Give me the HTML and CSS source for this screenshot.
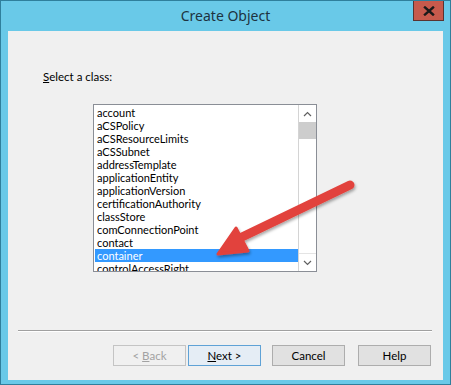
FILE: index.html
```html
<!DOCTYPE html>
<html>
<head>
<meta charset="utf-8">
<link rel="stylesheet" href="styles.css">
</head>
<body>
<div class="window">
  <div class="titlebar">
    <div class="title">Create Object</div>
    <div class="close">
      <svg width="12" height="10" viewBox="0 0 12 10"><path d="M2 1.5 L10 8.5 M10 1.5 L2 8.5" stroke="#1a1a1a" stroke-width="2.4" stroke-linecap="square"/></svg>
    </div>
  </div>
  <div class="client">
    <div class="label"><u>S</u>elect a class:</div>
    <div class="listbox">
      <div class="items">
        <div class="item">account</div>
        <div class="item">aCSPolicy</div>
        <div class="item">aCSResourceLimits</div>
        <div class="item">aCSSubnet</div>
        <div class="item">addressTemplate</div>
        <div class="item">applicationEntity</div>
        <div class="item">applicationVersion</div>
        <div class="item">certificationAuthority</div>
        <div class="item">classStore</div>
        <div class="item">comConnectionPoint</div>
        <div class="item">contact</div>
        <div class="item selected">container</div>
        <div class="item">controlAccessRight</div>
      </div>
      <div class="scrollbar">
        <div class="sb-btn">
          <svg width="9" height="6" viewBox="0 0 9 6"><path d="M1 5 L4.5 1.5 L8 5" fill="none" stroke="#606060" stroke-width="1.2"/></svg>
        </div>
        <div class="sb-thumb"></div>
        <div class="sb-track"></div>
        <div class="sb-btn">
          <svg width="9" height="6" viewBox="0 0 9 6"><path d="M1 1 L4.5 4.5 L8 1" fill="none" stroke="#606060" stroke-width="1.2"/></svg>
        </div>
      </div>
    </div>
    <div class="separator"></div>
    <div class="buttons">
      <div class="btn disabled">&lt; <u>B</u>ack</div>
      <div class="btn default"><u>N</u>ext &gt;</div>
      <div class="btn cancel">Cancel</div>
      <div class="btn help">Help</div>
    </div>
  </div>
  <svg class="arrow" width="451" height="385" viewBox="0 0 451 385">
    <defs>
      <filter id="sh" x="-20%" y="-20%" width="140%" height="140%">
        <feDropShadow dx="1" dy="2" stdDeviation="1.5" flood-color="#000" flood-opacity="0.35"/>
      </filter>
    </defs>
    <g filter="url(#sh)" fill="#e2423c" stroke="#e2423c">
      <line x1="350" y1="185" x2="242" y2="237" stroke-width="9" stroke-linecap="round"/>
      <path d="M218 254 L236 228 L248 251 Z" stroke-width="3" stroke-linejoin="round"/>
    </g>
  </svg>
</div>
</body>
</html>
```
FILE: styles.css
```css
html, body {
  margin: 0;
  padding: 0;
  background: #ffffff;
}
body {
  width: 451px;
  height: 385px;
  font-family: "Lato", "Noto Sans", sans-serif;
}
.window {
  position: relative;
  box-sizing: border-box;
  width: 451px;
  height: 385px;
  background: #69c9e8;
  border: 1px solid #2f7f9c;
  display: flex;
  flex-direction: column;
}
.titlebar {
  height: 30px;
  display: grid;
  grid-template-columns: 1fr auto 1fr;
  align-items: start;
}
.title {
  grid-column: 2;
  font-family: "Noto Sans", sans-serif;
  font-size: 14px;
  line-height: 20px;
  margin-top: 5px;
  color: #1d3340;
}
.close {
  grid-column: 3;
  justify-self: end;
  margin-right: 6px;
  width: 31px;
  height: 20px;
  box-sizing: border-box;
  background: #c75a4c;
  border: 1px solid #5a3330;
  border-top: none;
  display: flex;
  align-items: center;
  justify-content: center;
}
.client {
  flex: 1;
  margin: 0 7px 4px 7px;
  background: #f0f0f0;
  display: flex;
  flex-direction: column;
  font-size: 11px;
  color: #000;
}
.label {
  margin: 38px 0 0 35px;
  line-height: 15px;
  height: 15px;
  font-size: 11.5px;
}
.listbox {
  margin: 20px 0 0 85px;
  width: 224px;
  height: 168px;
  box-sizing: border-box;
  border: 1px solid #8a8e96;
  background: #fff;
  display: flex;
  overflow: hidden;
}
.items {
  flex: 1;
  padding: 1px 0 0 1px;
  overflow: hidden;
}
.item {
  height: 13px;
  line-height: 13px;
  padding-left: 2px;
  white-space: nowrap;
}
.item.selected {
  background: #3399ff;
  color: #ffffff;
}
.scrollbar {
  width: 17px;
  border-left: 1px solid #d4d4d4;
  display: flex;
  flex-direction: column;
  background: #fff;
}
.sb-btn {
  height: 17px;
  display: flex;
  align-items: center;
  justify-content: center;
}
.sb-thumb {
  height: 17px;
  background: #cdcdcd;
}
.sb-track {
  flex: 1;
  border-bottom: 1px solid #e4e4e4;
}
.separator {
  margin: 58px 11px 0 10px;
  height: 1px;
  background: #a0a0a0;
  border-bottom: 1px solid #ffffff;
}
.buttons {
  margin: 13px 0 0 105px;
  display: flex;
}
.btn {
  width: 73px;
  height: 21px;
  box-sizing: border-box;
  border: 1px solid #adadad;
  background: #e1e1e1;
  text-align: center;
  line-height: 19px;
  font-size: 11.5px;
}
.btn.disabled {
  color: #a2a2a2;
  border-color: #c4c4c4;
  background: #f0f0f0;
}
.btn.default {
  margin-left: 2px;
  border-color: #5fa2d6;
  background: #e5edf5;
}
.btn.cancel {
  margin-left: 11px;
}
.btn.help {
  margin-left: 13px;
}
.arrow {
  position: absolute;
  left: -1px;
  top: -1px;
  pointer-events: none;
}
```
